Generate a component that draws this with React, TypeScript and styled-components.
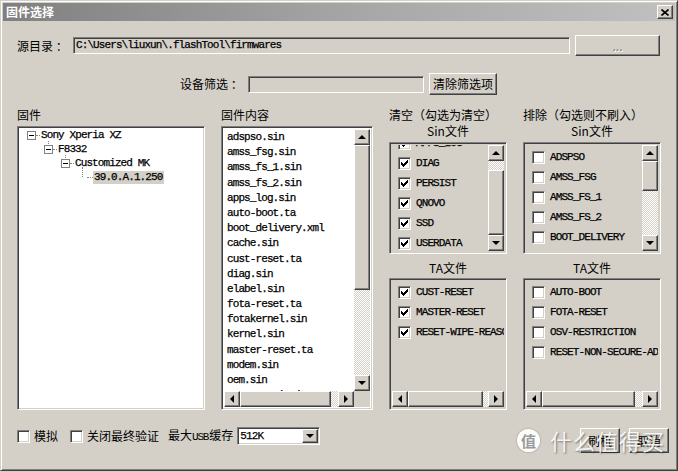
import React from 'react';
import styled, { createGlobalStyle, css } from 'styled-components';

const GlobalStyle = createGlobalStyle`
  html, body {
    margin: 0;
    padding: 0;
    background: #d4d0c8;
  }
  body {
    font-family: "Noto Sans CJK SC", "Liberation Sans", sans-serif;
    font-size: 12px;
    color: #000;
  }
  * {
    box-sizing: border-box;
  }
`;

const raised = css`
    border: 1px solid;
    border-color: #ffffff #404040 #404040 #ffffff;
    box-shadow: inset -1px -1px #808080, inset 1px 1px #d4d0c8;
    background: #d4d0c8;
`;

const sunken = css`
    border: 1px solid;
    border-color: #808080 #ffffff #ffffff #808080;
    box-shadow: inset 1px 1px #404040, inset -1px -1px #d4d0c8;
`;

const mono = css`
    font-family: "Liberation Mono", "Courier New", monospace;
    font-size: 11px;
    letter-spacing: -0.9px;
    -webkit-text-stroke: 0.25px #000;
`;

const Window = styled.div`
    position: relative;
    width: 678px;
    height: 471px;
    display: flex;
    flex-direction: column;
    padding: 2px;
    background: #d4d0c8;
    border: 1px solid;
    border-color: #d4d0c8 #404040 #404040 #d4d0c8;
    box-shadow: inset 1px 1px #ffffff, inset -1px -1px #808080;
    overflow: hidden;
`;

const TitleBar = styled.div`
    display: flex;
    align-items: center;
    justify-content: space-between;
    height: 18px;
    padding: 0 2px 0 3px;
    background: linear-gradient(to right, #808080, #a8a8a8 55%, #c0c0c0);
`;

const TitleText = styled.span`
    color: #ffffff;
    font-weight: bold;
    font-size: 12px;
    line-height: 14px;
`;

const CloseButton = styled.div`
    ${raised};
    width: 16px;
    height: 14px;
    display: flex;
    align-items: center;
    justify-content: center;
`;

const Body = styled.div`
    display: flex;
    flex-direction: column;
    padding: 14px 0 0 14px;
`;

const Row = styled.div<{ $indent?: number; $top?: number }>`
    display: flex;
    align-items: center;
    margin-top: ${p => p.$top || 0}px;
    padding-left: ${p => p.$indent || 0}px;
`;

const Label = styled.span<{ $w?: number }>`
    width: ${p => (p.$w ? `${p.$w}px` : 'auto')};
    flex: none;
    line-height: 14px;
    white-space: nowrap;
`;

const Narrow = styled.span`
    font-family: "Liberation Mono", monospace;
    font-size: 11px;
    letter-spacing: -1.2px;
    margin-right: 1px;
`;

const Field = styled.div<{ $w: number }>`
    ${sunken};
    ${mono};
    width: ${p => p.$w}px;
    height: 17px;
    padding-left: 2px;
    line-height: 15px;
    background: #d4d0c8;
    white-space: nowrap;
    overflow: hidden;
`;

const PushButton = styled.div<{ $w: number; $h: number; $dim?: boolean }>`
    ${raised};
    width: ${p => p.$w}px;
    height: ${p => p.$h}px;
    margin-left: 5px;
    display: flex;
    align-items: center;
    justify-content: center;
    flex: none;
    line-height: 14px;
    color: ${p => (p.$dim ? '#808080' : '#000000')};
    text-shadow: ${p => (p.$dim ? '1px 1px #ffffff' : 'none')};
`;

const Main = styled.div`
    display: flex;
    gap: 16px;
    margin-top: 13px;
`;

const Column = styled.div<{ $w: number }>`
    width: ${p => p.$w}px;
    display: flex;
    flex-direction: column;
`;

const Heading = styled.div<{ $center?: boolean; $top?: number }>`
    height: 14px;
    line-height: 14px;
    margin-top: ${p => p.$top || 0}px;
    text-align: ${p => (p.$center ? 'center' : 'left')};
    white-space: nowrap;
`;

const WhiteBox = styled.div`
    ${sunken};
    margin-top: 4px;
    height: 284px;
    background: #ffffff;
    overflow: hidden;
`;

const ListBox = styled.div`
    ${sunken};
    margin-top: 4px;
    height: 284px;
    background: #ffffff;
    display: grid;
    grid-template-columns: 1fr 16px;
    grid-template-rows: 1fr 16px;
    padding: 2px;
`;

const CheckBoxPanel = styled.div<{ $h: number; $top: number; $scroll: 'v' | 'h' }>`
    ${sunken};
    height: ${p => p.$h}px;
    margin-top: ${p => p.$top}px;
    padding: 2px;
    display: grid;
    grid-template-columns: ${p => (p.$scroll === 'v' ? '1fr 16px' : '1fr')};
    grid-template-rows: ${p => (p.$scroll === 'h' ? '1fr 16px' : '1fr')};
`;

const Clip = styled.div`
    overflow: hidden;
    min-width: 0;
    min-height: 0;
`;

const Items = styled.div<{ $shift: number }>`
    margin-top: ${p => p.$shift}px;
`;

const FileItem = styled.div`
    ${mono};
    height: 15.2px;
    line-height: 15.2px;
    padding-left: 3px;
    white-space: nowrap;
`;

const Corner = styled.div`
    background: #d4d0c8;
`;

/* tree */
const TreeRow = styled.div<{ $level: number }>`
    display: flex;
    align-items: center;
    height: 14px;
    padding-left: ${p => 9 + p.$level * 17}px;
`;

const Expander = styled.span<{ $child?: boolean }>`
    position: relative;
    width: 9px;
    height: 9px;
    flex: none;
    border: 1px solid #808080;
    background: #ffffff;

    &::after {
        content: '';
        position: absolute;
        left: 1px;
        top: 3px;
        width: 5px;
        height: 1px;
        background: #000000;
    }

    &::before {
        content: '';
        display: ${p => (p.$child ? 'block' : 'none')};
        position: absolute;
        left: 3px;
        bottom: 100%;
        height: 5px;
        border-left: 1px dotted #808080;
    }
`;

const LeafJoint = styled.span`
    position: relative;
    width: 9px;
    height: 14px;
    flex: none;

    &::before {
        content: '';
        position: absolute;
        left: 4px;
        top: -3px;
        height: 10px;
        border-left: 1px dotted #808080;
    }
`;

const Dots = styled.span<{ $w: number }>`
    width: ${p => p.$w}px;
    flex: none;
    border-top: 1px dotted #808080;
`;

const TreeLabel = styled.span<{ $selected?: boolean }>`
    ${mono};
    padding: 0 2px 0 1px;
    line-height: 13px;
    white-space: nowrap;
    background: ${p => (p.$selected ? '#d4d0c8' : 'transparent')};
`;

/* scrollbar */
const Bar = styled.div<{ $dir: 'v' | 'h' }>`
    display: flex;
    flex-direction: ${p => (p.$dir === 'v' ? 'column' : 'row')};
    min-width: 0;
    min-height: 0;
    background: repeating-conic-gradient(#ffffff 0 25%, #d4d0c8 0 50%) 0 0 / 2px 2px;
`;

const ArrowButton = styled.div`
    ${raised};
    width: 16px;
    height: 16px;
    flex: none;
    display: flex;
    align-items: center;
    justify-content: center;
`;

const Track = styled.div<{ $dir: 'v' | 'h' }>`
    flex: 1;
    display: flex;
    flex-direction: ${p => (p.$dir === 'v' ? 'column' : 'row')};
`;

const TrackGap = styled.div<{ $grow: number }>`
    flex: ${p => p.$grow} 1 0;
`;

const Thumb = styled.div<{ $grow: number }>`
    ${raised};
    flex: ${p => p.$grow} 1 0;
`;

const arrowShapes = {
    up: 'border-width: 0 4px 4px 4px; border-color: transparent transparent #000 transparent;',
    down: 'border-width: 4px 4px 0 4px; border-color: #000 transparent transparent transparent;',
    left: 'border-width: 4px 4px 4px 0; border-color: transparent #000 transparent transparent;',
    right: 'border-width: 4px 0 4px 4px; border-color: transparent transparent transparent #000;',
};

const Arrow = styled.span<{ $to: keyof typeof arrowShapes }>`
    width: 0;
    height: 0;
    border-style: solid;
    ${p => arrowShapes[p.$to]};
`;

/* checkboxes */
const CheckRow = styled.div`
    display: flex;
    align-items: center;
    gap: 5px;
    height: 20px;
    padding-left: 6px;
    white-space: nowrap;
`;

const Box = styled.span`
    ${sunken};
    width: 13px;
    height: 13px;
    flex: none;
    display: inline-flex;
    align-items: center;
    justify-content: center;
    background: #ffffff;
`;

const CheckText = styled.span`
    ${mono};
`;

/* bottom */
const Bottom = styled.div`
    display: flex;
    align-items: flex-start;
    margin-top: 17px;
`;

const Option = styled.div<{ $gap?: number }>`
    display: flex;
    align-items: center;
    gap: 4px;
    height: 18px;
    margin-left: ${p => p.$gap || 0}px;
`;

const Combo = styled.div`
    ${sunken};
    width: 83px;
    height: 18px;
    margin-left: 4px;
    display: flex;
    align-items: center;
    padding: 0 1px 0 2px;
    background: #ffffff;
`;

const ComboText = styled.span`
    ${mono};
    flex: 1;
`;

const ComboButton = styled(ArrowButton)`
    width: 16px;
    height: 14px;
`;

const Actions = styled.div`
    display: flex;
    gap: 4px;
    margin-left: auto;
    margin-right: 6px;
    margin-top: 1px;
`;

const Watermark = styled.div`
    position: absolute;
    left: 516px;
    top: 427px;
    display: flex;
    align-items: center;
    gap: 10px;
    pointer-events: none;
`;

const MarkBadge = styled.span`
    width: 23px;
    height: 23px;
    border-radius: 50%;
    background: rgba(255, 255, 255, 0.92);
    color: #9a9a9a;
    font-size: 15px;
    font-weight: bold;
    display: flex;
    align-items: center;
    justify-content: center;
    box-shadow: 0 0 2px rgba(0, 0, 0, 0.35);
`;

const MarkText = styled.span`
    color: rgba(255, 255, 255, 0.9);
    font-size: 22px;
    line-height: 24px;
    letter-spacing: 1px;
    text-shadow: 1px 1px 2px rgba(0, 0, 0, 0.45);
`;

type Dir = 'v' | 'h';
const ScrollBar = ({ dir, before, thumb, after }: { dir: Dir; before: number; thumb: number; after: number }) => (
    <Bar $dir={dir}>
        <ArrowButton>
            <Arrow $to={dir === 'v' ? 'up' : 'left'} />
        </ArrowButton>
        <Track $dir={dir}>
            <TrackGap $grow={before} />
            <Thumb $grow={thumb} />
            <TrackGap $grow={after} />
        </Track>
        <ArrowButton>
            <Arrow $to={dir === 'v' ? 'down' : 'right'} />
        </ArrowButton>
    </Bar>
);

const CheckMark = () => (
    <svg width="7" height="7" viewBox="0 0 7 7" shapeRendering="crispEdges">
        <rect x="0" y="2" width="1" height="3" fill="#000" />
        <rect x="1" y="3" width="1" height="3" fill="#000" />
        <rect x="2" y="4" width="1" height="3" fill="#000" />
        <rect x="3" y="3" width="1" height="3" fill="#000" />
        <rect x="4" y="2" width="1" height="3" fill="#000" />
        <rect x="5" y="1" width="1" height="3" fill="#000" />
        <rect x="6" y="0" width="1" height="3" fill="#000" />
    </svg>
);

const Check = ({ on }: { on?: boolean }) => <Box>{on && <CheckMark />}</Box>;

const files = [
    'adspso.sin',
    'amss_fsg.sin',
    'amss_fs_1.sin',
    'amss_fs_2.sin',
    'apps_log.sin',
    'auto-boot.ta',
    'boot_delivery.xml',
    'cache.sin',
    'cust-reset.ta',
    'diag.sin',
    'elabel.sin',
    'fota-reset.ta',
    'fotakernel.sin',
    'kernel.sin',
    'master-reset.ta',
    'modem.sin',
    'oem.sin',
    'osv-restriction.ta',
    'persist.sin',
];

const clearSin = ['APPS_LOG', 'DIAG', 'PERSIST', 'QNOVO', 'SSD', 'USERDATA'];
const clearTa = ['CUST-RESET', 'MASTER-RESET', 'RESET-WIPE-REASON'];
const skipSin = ['ADSPSO', 'AMSS_FSG', 'AMSS_FS_1', 'AMSS_FS_2', 'BOOT_DELIVERY', 'CACHE'];
const skipTa = ['AUTO-BOOT', 'FOTA-RESET', 'OSV-RESTRICTION', 'RESET-NON-SECURE-ADB'];

const CheckList = ({ items, on, shift }: { items: string[]; on: boolean; shift: number }) => (
    <Clip>
        <Items $shift={shift}>
            {items.map(name => (
                <CheckRow key={name}>
                    <Check on={on} />
                    <CheckText>{name}</CheckText>
                </CheckRow>
            ))}
        </Items>
    </Clip>
);

export default function App() {
    return (
        <>
            <GlobalStyle />
            <Window>
                <TitleBar>
                    <TitleText>固件选择</TitleText>
                    <CloseButton>
                        <svg width="8" height="7" viewBox="0 0 8 7">
                            <path d="M0.5 0.5L7.5 6.5M7.5 0.5L0.5 6.5" stroke="#000" strokeWidth="1.6" />
                        </svg>
                    </CloseButton>
                </TitleBar>

                <Body>
                    <Row>
                        <Label $w={56}>源目录 ：</Label>
                        <Field $w={497}>C:\Users\liuxun\.flashTool\firmwares</Field>
                        <PushButton $w={85} $h={21} $dim>
                            ...
                        </PushButton>
                    </Row>

                    <Row $top={17} $indent={163}>
                        <Label $w={68}>设备筛选 ：</Label>
                        <Field $w={176} />
                        <PushButton $w={68} $h={22}>
                            清除筛选项
                        </PushButton>
                    </Row>

                    <Main>
                        <Column $w={188}>
                            <Heading>固件</Heading>
                            <WhiteBox>
                                <Items $shift={1}>
                                    <TreeRow $level={0}>
                                        <Expander />
                                        <Dots $w={4} />
                                        <TreeLabel>Sony Xperia XZ</TreeLabel>
                                    </TreeRow>
                                    <TreeRow $level={1}>
                                        <Expander $child />
                                        <Dots $w={4} />
                                        <TreeLabel>F8332</TreeLabel>
                                    </TreeRow>
                                    <TreeRow $level={2}>
                                        <Expander $child />
                                        <Dots $w={4} />
                                        <TreeLabel>Customized MK</TreeLabel>
                                    </TreeRow>
                                    <TreeRow $level={3}>
                                        <LeafJoint />
                                        <Dots $w={6} />
                                        <TreeLabel $selected>39.0.A.1.250</TreeLabel>
                                    </TreeRow>
                                </Items>
                            </WhiteBox>
                        </Column>

                        <Column $w={152}>
                            <Heading>固件内容</Heading>
                            <ListBox>
                                <Clip>
                                    <Items $shift={1}>
                                        {files.map(f => (
                                            <FileItem key={f}>{f}</FileItem>
                                        ))}
                                    </Items>
                                </Clip>
                                <ScrollBar dir="v" before={0} thumb={146} after={86} />
                                <ScrollBar dir="h" before={0} thumb={95} after={7} />
                                <Corner />
                            </ListBox>
                        </Column>

                        <Column $w={118}>
                            <Heading>清空（勾选为清空）</Heading>
                            <Heading $center $top={2}>
                                Sin文件
                            </Heading>
                            <CheckBoxPanel $h={112} $top={4} $scroll="v">
                                <CheckList items={clearSin} on shift={-12} />
                                <ScrollBar dir="v" before={10} thumb={68} after={0} />
                            </CheckBoxPanel>
                            <Heading $center $top={7}>
                                TA文件
                            </Heading>
                            <CheckBoxPanel $h={132} $top={3} $scroll="h">
                                <CheckList items={clearTa} on shift={1} />
                                <ScrollBar dir="h" before={0} thumb={78} after={5} />
                            </CheckBoxPanel>
                        </Column>

                        <Column $w={138}>
                            <Heading>排除（勾选则不刷入）</Heading>
                            <Heading $center $top={2}>
                                Sin文件
                            </Heading>
                            <CheckBoxPanel $h={112} $top={4} $scroll="v">
                                <CheckList items={skipSin} on={false} shift={2} />
                                <ScrollBar dir="v" before={0} thumb={30} after={48} />
                            </CheckBoxPanel>
                            <Heading $center $top={7}>
                                TA文件
                            </Heading>
                            <CheckBoxPanel $h={132} $top={3} $scroll="h">
                                <CheckList items={skipTa} on={false} shift={1} />
                                <ScrollBar dir="h" before={0} thumb={96} after={7} />
                            </CheckBoxPanel>
                        </Column>
                    </Main>

                    <Bottom>
                        <Option>
                            <Check />
                            <Label>模拟</Label>
                        </Option>
                        <Option $gap={12}>
                            <Check />
                            <Label>关闭最终验证</Label>
                        </Option>
                        <Option $gap={9}>
                            <Label>
                                最大<Narrow>USB</Narrow>缓存
                            </Label>
                        </Option>
                        <Combo>
                            <ComboText>512K</ComboText>
                            <ComboButton>
                                <Arrow $to="down" />
                            </ComboButton>
                        </Combo>
                        <Actions>
                            <PushButton $w={40} $h={25}>
                                刷机
                            </PushButton>
                            <PushButton $w={40} $h={25}>
                                取消
                            </PushButton>
                        </Actions>
                    </Bottom>
                </Body>

                <Watermark>
                    <MarkBadge>值</MarkBadge>
                    <MarkText>什么值得买</MarkText>
                </Watermark>
            </Window>
        </>
    );
}
